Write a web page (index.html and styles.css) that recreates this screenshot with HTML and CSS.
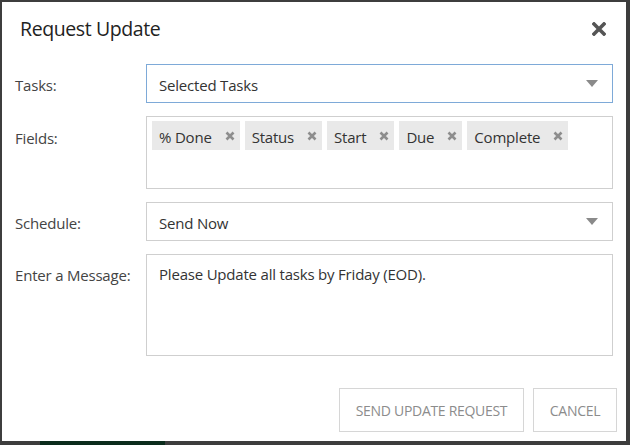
FILE: index.html
```html
<!DOCTYPE html>
<html>
<head>
<meta charset="utf-8">
<link rel="stylesheet" href="styles.css">
</head>
<body>
<div class="dialog">
  <div class="header">
    <h1 class="title">Request Update</h1>
    <span class="close" aria-label="Close">
      <svg width="14" height="14" viewBox="0 0 14 14"><path d="M2 2 L12 12 M12 2 L2 12" stroke="#555" stroke-width="3.6" stroke-linecap="square"/></svg>
    </span>
  </div>
  <div class="form">
    <label class="label">Tasks:</label>
    <div class="select focused"><span>Selected Tasks</span><i class="caret"></i></div>

    <label class="label top">Fields:</label>
    <div class="tags">
      <span class="tag">% Done <svg class="x" width="10" height="10" viewBox="0 0 10 10"><path d="M1.5 1.5 L8.5 8.5 M8.5 1.5 L1.5 8.5"/></svg></span>
      <span class="tag">Status <svg class="x" width="10" height="10" viewBox="0 0 10 10"><path d="M1.5 1.5 L8.5 8.5 M8.5 1.5 L1.5 8.5"/></svg></span>
      <span class="tag">Start <svg class="x" width="10" height="10" viewBox="0 0 10 10"><path d="M1.5 1.5 L8.5 8.5 M8.5 1.5 L1.5 8.5"/></svg></span>
      <span class="tag">Due <svg class="x" width="10" height="10" viewBox="0 0 10 10"><path d="M1.5 1.5 L8.5 8.5 M8.5 1.5 L1.5 8.5"/></svg></span>
      <span class="tag">Complete <svg class="x" width="10" height="10" viewBox="0 0 10 10"><path d="M1.5 1.5 L8.5 8.5 M8.5 1.5 L1.5 8.5"/></svg></span>
    </div>

    <label class="label">Schedule:</label>
    <div class="select"><span>Send Now</span><i class="caret"></i></div>

    <label class="label top msg">Enter a Message:</label>
    <div class="textarea">Please Update all tasks by Friday (EOD).</div>
  </div>
  <div class="actions">
    <button class="btn send">SEND UPDATE REQUEST</button>
    <button class="btn cancel">CANCEL</button>
  </div>
</div>
<div class="backdrop-strip"><span class="green"></span></div>
</body>
</html>
```

FILE: styles.css
```css
html, body {
  margin: 0;
  padding: 0;
}
body {
  background: #3d3d3d;
  width: 630px;
  height: 445px;
  overflow: hidden;
  padding: 2px 0 0 2px;
  box-sizing: border-box;
  font-family: "Open Sans", "Noto Sans", sans-serif;
  color: #333;
}
.dialog {
  width: 624px;
  height: 439px;
  background: #fff;
  box-sizing: border-box;
  display: flex;
  flex-direction: column;
}
.header {
  height: 50px;
  display: flex;
  align-items: center;
  justify-content: space-between;
  padding: 0 20px 0 18px;
}
.title {
  margin: 0;
  font-size: 19.5px;
  font-weight: 400;
  color: #222;
  letter-spacing: -0.4px;
  padding-top: 2px;
}
.close {
  display: flex;
  margin-top: 3px;
}
.form {
  margin-top: 12px;
  display: grid;
  grid-template-columns: 144px 467px;
  row-gap: 13px;
}
.label {
  font-size: 15px;
  color: #444;
  padding-left: 13px;
  padding-top: 2px;
  align-self: center;
  letter-spacing: -0.2px;
}
.label.top {
  align-self: start;
  padding-top: 12px;
}
.label.msg {
  padding-top: 11px;
}
.select {
  height: 39px;
  border: 1px solid #cfcfcf;
  box-sizing: border-box;
  display: flex;
  align-items: center;
  justify-content: space-between;
  padding: 2px 14px 0 12px;
  font-size: 15px;
  letter-spacing: -0.2px;
}
.select.focused {
  border-color: #7eaad8;
}
.caret {
  width: 0;
  height: 0;
  margin-top: -2px;
  border-left: 6px solid transparent;
  border-right: 6px solid transparent;
  border-top: 7px solid #8a8a8a;
}
.tags {
  height: 73px;
  border: 1px solid #cfcfcf;
  box-sizing: border-box;
  padding: 4px 5px;
  display: flex;
  align-items: flex-start;
  gap: 5px;
}
.tag {
  height: 29px;
  background: #e9e9e9;
  display: inline-flex;
  align-items: center;
  padding: 2px 5px 0 7px;
  box-sizing: border-box;
  font-size: 15px;
  letter-spacing: -0.2px;
  color: #333;
  gap: 13px;
}
.x {
  margin-top: -2px;
  stroke: #8d8d8d;
  stroke-width: 2.6;
  fill: none;
}
.textarea {
  height: 102px;
  border: 1px solid #cfcfcf;
  box-sizing: border-box;
  padding: 9px 12px;
  font-size: 15px;
  letter-spacing: -0.2px;
}
.actions {
  margin-top: auto;
  display: flex;
  justify-content: flex-end;
  gap: 9px;
  padding: 0 9px 9px 0;
}
.btn {
  height: 44px;
  background: #fff;
  border: 1px solid #d6d6d6;
  font-family: inherit;
  font-size: 14px;
  color: #8c8c8c;
  letter-spacing: -0.3px;
  padding: 0;
}
.send {
  width: 185px;
}
.cancel {
  width: 84px;
}
.backdrop-strip {
  height: 4px;
  display: flex;
}
.green {
  margin-left: 38px;
  width: 125px;
  background: #0b2c1c;
}
```
